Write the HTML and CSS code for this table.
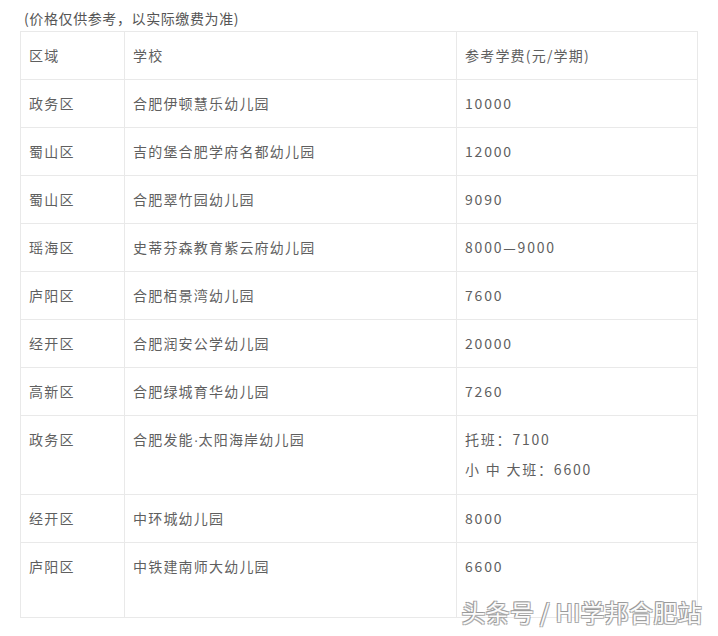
FILE: index.html
```html
<!DOCTYPE html>
<html>
<head>
<meta charset="utf-8">
<link rel="stylesheet" href="styles.css">
</head>
<body>
<div class="page">
  <p class="caption">(价格仅供参考，以实际缴费为准)</p>
  <table class="fees">
    <colgroup><col class="c1"><col class="c2"><col class="c3"></colgroup>
    <tr><td>区域</td><td>学校</td><td>参考学费(元/学期)</td></tr>
    <tr><td>政务区</td><td>合肥伊顿慧乐幼儿园</td><td class="num">10000</td></tr>
    <tr><td>蜀山区</td><td>吉的堡合肥学府名都幼儿园</td><td class="num">12000</td></tr>
    <tr><td>蜀山区</td><td>合肥翠竹园幼儿园</td><td class="num">9090</td></tr>
    <tr><td>瑶海区</td><td>史蒂芬森教育紫云府幼儿园</td><td class="num">8000—9000</td></tr>
    <tr><td>庐阳区</td><td>合肥栢景湾幼儿园</td><td class="num">7600</td></tr>
    <tr><td>经开区</td><td>合肥润安公学幼儿园</td><td class="num">20000</td></tr>
    <tr><td>高新区</td><td>合肥绿城育华幼儿园</td><td class="num">7260</td></tr>
    <tr class="double"><td>政务区</td><td>合肥发能<span class="dot">·</span>太阳海岸幼儿园</td><td class="num">托班：7100<br>小 中 大班：6600</td></tr>
    <tr><td>经开区</td><td>中环城幼儿园</td><td class="num">8000</td></tr>
    <tr class="last"><td>庐阳区</td><td>中铁建南师大幼儿园</td><td class="num">6600</td></tr>
  </table>
  <div class="watermark">头条号 / HI学邦合肥站</div>
</div>
</body>
</html>
```
FILE: styles.css
```css
html, body {
  margin: 0;
  padding: 0;
  background: #fff;
}
.page {
  position: relative;
  width: 718px;
  height: 636px;
  overflow: hidden;
  font-family: "Noto Sans CJK SC", "Liberation Sans", sans-serif;
  color: #5f5f5f;
}
.caption {
  margin: 0;
  padding: 8px 0 0 24px;
  height: 23px;
  font-size: 14px;
  line-height: 20px;
  letter-spacing: 0.6px;
  color: #555;
}
.fees {
  margin-left: 20px;
  width: 677px;
  border-collapse: collapse;
  table-layout: fixed;
}
.c1 { width: 104px; }
.c2 { width: 332px; }
.c3 { width: 241px; }
.fees td {
  border: 1px solid #e9e9e9;
  padding: 8px 8px 9px 8px;
  font-size: 14px;
  line-height: 30px;
  letter-spacing: 1.2px;
  vertical-align: top;
}
.fees td.num {
  letter-spacing: 1.8px;
}
.dot {
  font-family: "Liberation Sans", sans-serif;
  letter-spacing: 0;
}
.fees tr.double td {
  padding-bottom: 10px;
}
.fees tr.last td {
  height: 57px;
}
.watermark {
  position: absolute;
  right: 16px;
  top: 596px;
  font-size: 24px;
  line-height: 32px;
  color: #fbfbfb;
  letter-spacing: 0.3px;
  text-shadow: -1px -1px 0 #9a9a9a, 1px 1px 0 #b0b0b0, 1px -1px 0 #aaa, -1px 1px 0 #aaa;
}
```
